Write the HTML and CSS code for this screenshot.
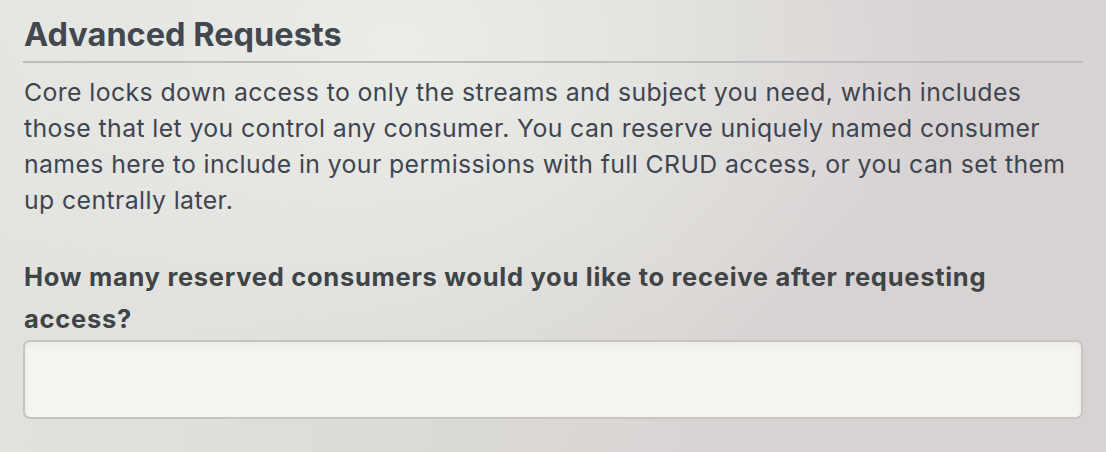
FILE: index.html
```html
<!DOCTYPE html>
<html lang="en">
<head>
<meta charset="utf-8">
<link rel="stylesheet" href="styles.css">
</head>
<body>
<main class="panel">
  <h2 class="title">Advanced Requests</h2>
  <p class="desc">Core locks down access to only the streams and subject you need, which includes those that let you control any consumer. You can reserve uniquely named consumer names here to include in your permissions with full CRUD access, or you can set them up centrally later.</p>
  <label class="question" for="reserved">How many reserved consumers would you like to receive after requesting access?</label>
  <input class="field" id="reserved" type="text">
</main>
</body>
</html>
```
FILE: styles.css
```css
html, body {
  margin: 0;
  height: 100%;
}
body {
  background:
    radial-gradient(ellipse 560px 380px at 400px 40px, rgba(236,238,233,0.95), rgba(236,238,233,0) 100%),
    linear-gradient(100deg, #e2e3df 0%, #dcdbd8 40%, #d8d3d3 72%, #d8d3d3 100%);
  font-family: Inter, "Noto Sans", sans-serif;
  color: #404651;
  overflow: hidden;
}
.panel {
  padding: 15px 23px 0 23px;
  display: flex;
  flex-direction: column;
}
.title {
  margin: 0;
  font-size: 32.5px;
  font-weight: 700;
  line-height: 40px;
  color: #43474f;
  padding: 0 0 6px 1px;
  border-bottom: 2px solid #bdbdbd;
}
.desc {
  margin: 11px 0 0 1px;
  font-size: 24.8px;
  letter-spacing: 0.4px;
  line-height: 36px;
  color: #3f4550;
}
.question {
  margin: 38px 0 0 1px;
  font-size: 25.5px;
  font-weight: 700;
  letter-spacing: 0.72px;
  line-height: 42px;
  color: #3f4447;
}
.field {
  margin-top: 0;
  height: 79px;
  box-sizing: border-box;
  border: 2px solid #c6c5c4;
  border-radius: 7px;
  background: #f6f4f1;
  box-shadow: inset 0 4px 6px rgba(0,0,0,0.04);
}
```
